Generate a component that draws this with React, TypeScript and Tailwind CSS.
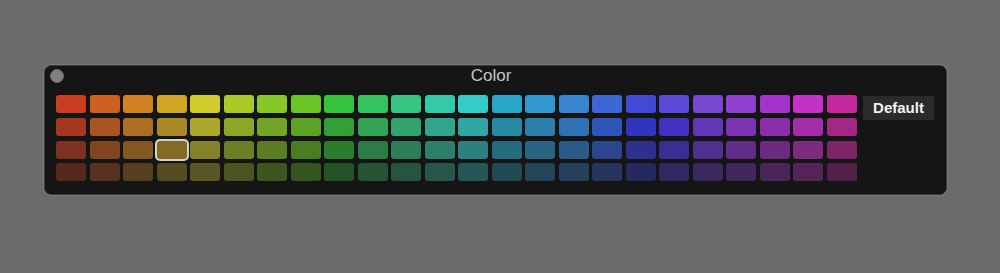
import React from 'react';

// per column: hue, saturation and lightness of the brightest row
const HUES = [10, 22, 33, 45, 58, 72, 83, 94, 123, 138, 151, 166, 179, 193, 201, 210, 224, 238, 247, 261, 274, 285, 298, 315];
const SAT = [72, 72, 72, 70, 65, 68, 68, 68, 58, 57, 57, 58, 59, 66, 63, 64, 65, 64, 64, 60, 60, 61, 62, 66];
const LIGHT = [46, 47, 47.5, 48, 50, 47, 46.5, 46, 48.5, 49, 49.5, 50, 50, 47, 50, 52.5, 54, 55, 57, 55, 53, 50, 49, 46.5];

// darker rows: base lightness, how much of the column offset stays, saturation factor
const SHADES = [
  { l: 47, k: 1, sf: 1 },
  { l: 40, k: 0.8, sf: 0.92 },
  { l: 32, k: 0.6, sf: 0.82 },
  { l: 23, k: 0.4, sf: 0.66 },
];

const SELECTED = { row: 2, col: 3 };

function Swatch({ color, selected }: { color: string; selected: boolean }) {
  return (
    <button
      className={`h-[18px] rounded-[3px] ${selected ? 'ring-2 ring-[#d2d2d2]' : ''}`}
      style={{ backgroundColor: color }}
      aria-label={color}
    />
  );
}

export default function App() {
  return (
    <div
      className="h-[273px] w-full bg-[#6b6b6b] pt-[65px] pl-[44px]"
      style={{ fontFamily: '"Liberation Sans", Arial, sans-serif' }}
    >
      <div className="flex h-[130px] w-[903px] flex-col rounded-[7px] border border-[#3a3a3a] bg-[#151515] shadow-[0_0_0_1px_#7a7a7a]">
        {/* Title bar */}
        <div className="grid h-[29px] grid-cols-[1fr_auto_1fr] items-start">
          <div className="ml-[5px] mt-[3px] size-[14px] rounded-full border border-[#6a6a6a] bg-[#808080]" />
          <div className="pr-[9px] text-[17px] leading-[20px] text-[#c6c6c6]">Color</div>
          <div />
        </div>

        {/* Palette */}
        <div className="flex items-start gap-[6px] pl-[11px]">
          <div className="grid w-[801px] grid-cols-[repeat(24,minmax(0,1fr))] gap-x-[3.5px] gap-y-[4.8px]">
            {SHADES.map((shade, r) =>
              HUES.map((hue, c) => {
                const l = shade.l + (LIGHT[c] - 47) * shade.k;
                const s = SAT[c] * shade.sf;
                return (
                  <Swatch
                    key={`${r}-${c}`}
                    color={`hsl(${hue} ${s.toFixed(1)}% ${l.toFixed(1)}%)`}
                    selected={r === SELECTED.row && c === SELECTED.col}
                  />
                );
              }),
            )}
          </div>
          <button className="mt-[1px] h-[24px] w-[71px] bg-[#2b2b2b] text-[15px] font-bold leading-[24px] text-[#f2f2f2]">
            Default
          </button>
        </div>
      </div>
    </div>
  );
}
